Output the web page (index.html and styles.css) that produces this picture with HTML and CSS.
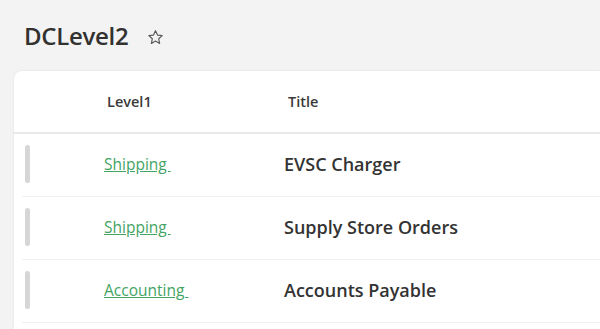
FILE: index.html
```html
<!DOCTYPE html>
<html lang="en">
  <head>
    <meta charset="UTF-8" />
    <meta name="viewport" content="width=device-width, initial-scale=1.0" />
    <title>DCLevel2</title>
    <link rel="stylesheet" href="styles.css">
  </head>
  <body>
    <div class="page-header">
      <h1>DCLevel2</h1>
      <span class="fav-star">
        <svg width="17" height="17" viewBox="0 0 16 16">
          <path d="M8 1.6l1.9 4.1 4.4.5-3.3 3 .9 4.4L8 11.4l-3.9 2.2.9-4.4-3.3-3 4.4-.5z" fill="none" stroke="#5a5a5a" stroke-width="1.1" stroke-linejoin="round"/>
        </svg>
      </span>
    </div>

    <div class="list-card">
      <div class="list-head">
        <div class="col-level">Level1</div>
        <div class="col-title">Title</div>
      </div>
      <div class="list-row">
        <div class="col-handle"><span class="handle"></span></div>
        <div class="col-level"><a href="#">Shipping&nbsp;</a></div>
        <div class="col-title">EVSC Charger</div>
      </div>
      <div class="list-row">
        <div class="col-handle"><span class="handle"></span></div>
        <div class="col-level"><a href="#">Shipping&nbsp;</a></div>
        <div class="col-title">Supply Store Orders</div>
      </div>
      <div class="list-row">
        <div class="col-handle"><span class="handle"></span></div>
        <div class="col-level"><a href="#">Accounting&nbsp;</a></div>
        <div class="col-title">Accounts Payable</div>
      </div>
    </div>
  </body>
</html>
```

FILE: styles.css
```css
body {
  margin: 0;
  background-color: #f3f3f3;
  font-family: "Open Sans", "Noto Sans", sans-serif;
  color: #323130;
  overflow: hidden;
}
.page-header {
  display: flex;
  align-items: center;
  height: 71px;
  padding-left: 24px;
  box-sizing: border-box;
}
h1 {
  margin: 0;
  font-size: 24px;
  font-weight: 600;
  letter-spacing: -0.3px;
}
.fav-star {
  display: flex;
  margin-left: 19px;
  margin-top: 3px;
}
.list-card {
  margin-left: 14px;
  background-color: #fff;
  border-radius: 8px 0 0 0;
  box-shadow: 0 0 3px rgba(0, 0, 0, 0.08);
  min-height: 258px;
}
.list-head {
  display: flex;
  align-items: center;
  height: 61px;
  padding-left: 93px;
  border-bottom: 2px solid #e9e9e9;
  font-size: 14.5px;
  font-weight: 600;
  color: #3b3a39;
}
.list-head .col-level {
  width: 181px;
}
.list-row {
  display: flex;
  align-items: center;
  height: 62px;
  margin-left: 8px;
  border-bottom: 1px solid #f0f0f0;
}
.col-handle {
  width: 82px;
  display: flex;
}
.handle {
  display: block;
  width: 5px;
  height: 38px;
  margin-left: 3px;
  margin-top: -2px;
  border-radius: 3px;
  background-color: #d6d6d6;
}
.list-row .col-level {
  width: 180px;
  font-size: 15.5px;
  margin-top: -3px;
}
.list-row a {
  color: #43a463;
  text-decoration: underline;
}
.list-row .col-title {
  font-size: 18px;
  font-weight: 600;
  color: #333;
  margin-top: -2px;
}
```
